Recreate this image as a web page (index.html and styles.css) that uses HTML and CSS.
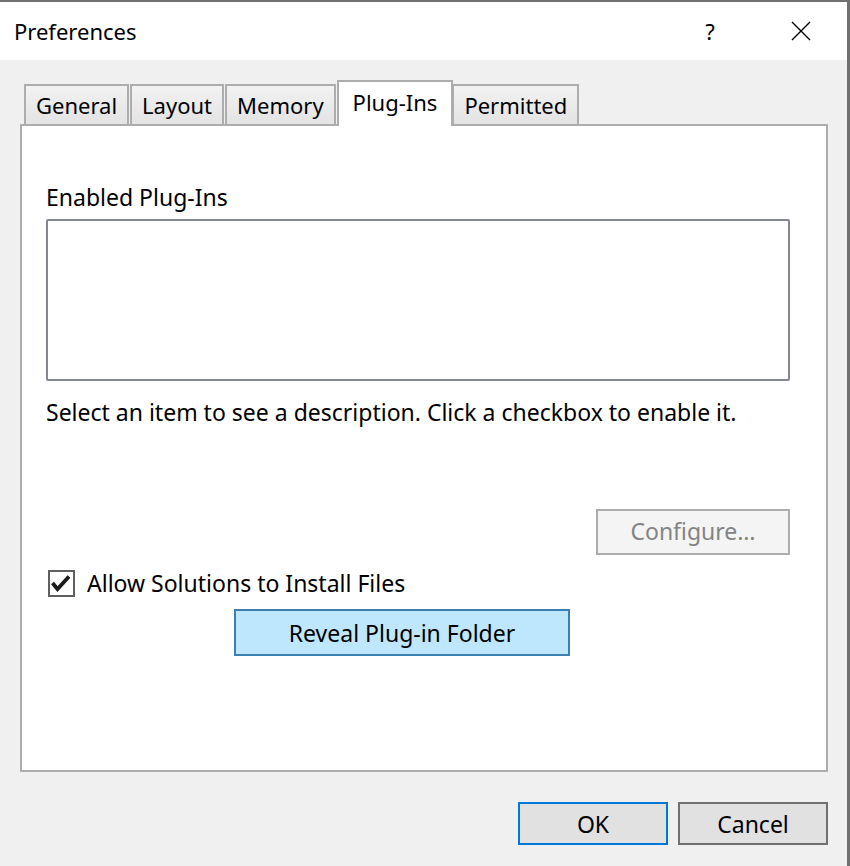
FILE: index.html
```html
<!DOCTYPE html>
<html lang="en">
<head>
    <meta charset="UTF-8">
    <meta name="viewport" content="width=device-width, initial-scale=1.0">
    <title>Preferences</title>
    <link rel="stylesheet" href="styles.css">
</head>
<body>
    <div class="window">
        <div class="titlebar">
            <span class="title">Preferences</span>
            <span class="help">?</span>
            <span class="close">
                <svg width="20" height="20" viewBox="0 0 20 20">
                    <path d="M1 1 L19 19 M19 1 L1 19" stroke="#000" stroke-width="1.4" fill="none"/>
                </svg>
            </span>
        </div>
        <div class="content">
            <div class="tabs">
                <div class="tab">General</div>
                <div class="tab">Layout</div>
                <div class="tab">Memory</div>
                <div class="tab active">Plug-Ins</div>
                <div class="tab">Permitted</div>
            </div>
            <div class="panel">
                <div class="label">Enabled Plug-Ins</div>
                <div class="listbox"></div>
                <p class="description">Select an item to see a description. Click a checkbox to enable it.</p>
                <div class="configure-row">
                    <button type="button" class="btn disabled">Configure…</button>
                </div>
                <label class="check-row">
                    <span class="checkbox">
                        <svg width="22" height="22" viewBox="0 0 22 22">
                            <path d="M2.5 11 L7.5 17 L19 4.5" stroke="#1a1a1a" stroke-width="3.8" fill="none"/>
                        </svg>
                    </span>
                    <span>Allow Solutions to Install Files</span>
                </label>
                <button type="button" class="btn reveal">Reveal Plug-in Folder</button>
            </div>
            <div class="footer">
                <button type="button" class="btn default">OK</button>
                <button type="button" class="btn">Cancel</button>
            </div>
        </div>
    </div>
</body>
</html>
```
FILE: styles.css
```css
* {
    box-sizing: border-box;
}
body {
    margin: 0;
    background-color: #f0f0f0;
    font-family: "Segoe UI", "Noto Sans", sans-serif;
    font-size: 23px;
    line-height: 30px;
    color: #000;
}
.window {
    width: 850px;
    height: 866px;
    background-color: #f0f0f0;
    border-top: 2px solid #707070;
    border-right: 3px solid #707070;
}
.titlebar {
    height: 58px;
    background-color: #fff;
    display: flex;
    align-items: center;
    padding-left: 14px;
}
.title {
    flex: 1;
    font-size: 22px;
}
.help {
    width: 16px;
    text-align: center;
    font-size: 22px;
    margin-right: 73px;
}
.close {
    display: flex;
    margin-right: 36px;
}
.content {
    padding: 20px 19px 0 20px;
}
.tabs {
    display: flex;
    align-items: flex-end;
    height: 46px;
    margin-bottom: -2px;
    padding-left: 4px;
}
.tab {
    height: 40px;
    margin-bottom: 2px;
    padding: 0 10px;
    border: 2px solid #adadad;
    border-bottom: none;
    background: linear-gradient(#f2f2f2, #e3e3e3);
    font-size: 22px;
    display: flex;
    align-items: center;
}
.tab + .tab {
    margin-left: 1px;
}
.tab.active {
    position: relative;
    z-index: 1;
    height: 46px;
    margin-bottom: 0;
    padding: 0 14px 4px;
    background: #fff;
}
.tab.active + .tab {
    margin-left: -1px;
}
.panel {
    height: 648px;
    background-color: #fff;
    border: 2px solid #adadad;
    padding: 56px 36px 0 24px;
}
.listbox {
    height: 162px;
    margin-top: 7px;
    border: 2px solid #828790;
    border-radius: 2px;
}
.description {
    margin: 16px 0 0;
}
.configure-row {
    display: flex;
    justify-content: flex-end;
    margin-top: 82px;
}
.btn {
    font-family: inherit;
    font-size: 23px;
    color: #000;
    height: 43px;
    width: 150px;
    background-color: #e1e1e1;
    border: 2px solid #707070;
    padding: 0;
}
.btn.disabled {
    width: 194px;
    height: 46px;
    padding-bottom: 2px;
    color: #838383;
    background-color: #f4f4f4;
    border-color: #adadad;
}
.check-row {
    display: flex;
    align-items: center;
    margin-top: 13px;
    margin-left: 2px;
}
.checkbox {
    width: 27px;
    height: 27px;
    border: 2px solid #5f5f5f;
    margin-right: 12px;
    display: flex;
}
.reveal {
    display: block;
    width: 336px;
    height: 47px;
    margin: 11px 0 0 188px;
    background-color: #bee6fd;
    border-color: #3c7fb1;
}
.footer {
    display: flex;
    justify-content: flex-end;
    gap: 10px;
    margin-top: 30px;
}
.btn.default {
    border-color: #0078d7;
}
```
